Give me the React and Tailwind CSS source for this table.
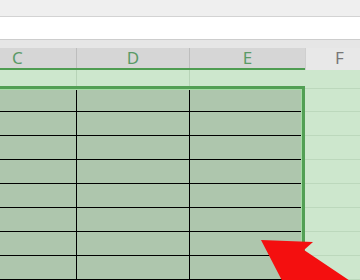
import React from "react";

const rows = [22, 24, 24, 24, 24, 24, 24, 24];

const App = () => {
  return (
    <div className="relative w-[360px] h-[280px] overflow-hidden bg-[#cde7cd] font-['Noto_Sans',sans-serif]">
      {/* ribbon edge + formula bar */}
      <div className="h-[17px] bg-[#efefef] border-b border-[#d3d3d3]" />
      <div className="h-[23px] bg-white border-b border-[#cdcdcd]" />
      <div className="h-[8px] bg-[#e6e6e6]" />

      {/* column headers */}
      <div className="flex h-[22px]">
        <div className="flex w-[305px] bg-[#d6d6d6] border-b-2 border-[#4f9d52]">
          <div className="w-[77px] border-r border-[#bdbdbd] pl-[12px] text-[17px] leading-[20px] text-[#5a9a66]">C</div>
          <div className="w-[113px] border-r border-[#bdbdbd] text-center text-[17px] leading-[20px] text-[#5a9a66]">D</div>
          <div className="flex-1 text-center text-[17px] leading-[20px] text-[#5a9a66]">E</div>
        </div>
        <div className="flex-1 bg-[#e8e8e8] border-l border-[#cfcfcf] pl-[29px] text-[17px] leading-[20px] text-[#777]">F</div>
      </div>

      <div className="flex">
        {/* selected block C:E */}
        <div className="w-[305px]">
          <div className="flex h-[16px]">
            <div className="w-[77px] border-r border-[#b7d3b7]" />
            <div className="w-[113px] border-r border-[#b7d3b7]" />
            <div className="flex-1" />
          </div>
          <div className="border-t-[3px] border-r-[3px] border-[#529f54]">
            <div className="border-t border-r border-[#a6dca6] bg-[#aec6ad]">
              {rows.map((h, i) => (
                <div key={i} style={{ height: h }} className="flex border-b border-black">
                  <div className="w-[77px] border-r border-black" />
                  <div className="w-[113px] border-r border-black" />
                  <div className="flex-1" />
                </div>
              ))}
            </div>
          </div>
        </div>

        {/* column F */}
        <div className="flex-1">
          <div className="h-[19px] border-b border-[#bcd8bc]" />
          <div className="h-[23px] border-b border-[#bcd8bc]" />
          {rows.slice(1).map((_, i) => (
            <div key={i} className="h-[24px] border-b border-[#bcd8bc]" />
          ))}
        </div>
      </div>

      {/* red pointer arrow */}
      <svg className="absolute left-0 top-0" width="360" height="280" viewBox="0 0 360 280">
        <polygon
          points="261,240 313,242 304,250 380,301 362,326 296,292 291,298"
          fill="#f40f0f"
        />
      </svg>
    </div>
  );
};

export default App;
